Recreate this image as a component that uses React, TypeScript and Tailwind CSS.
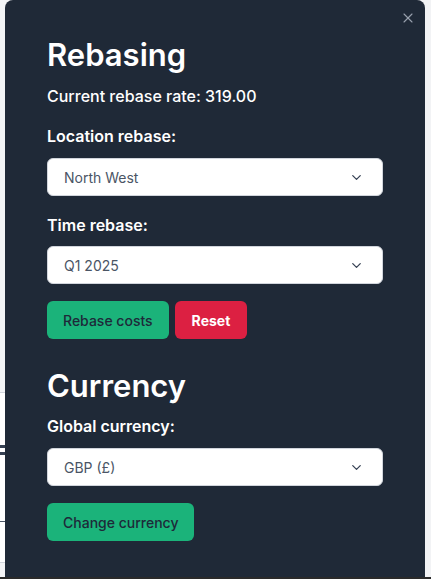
import { ChevronDown, X } from "lucide-react";

function SelectBox({ value }: { value: string }) {
  return (
    <div className="flex h-[38px] w-full items-center justify-between rounded-md border border-gray-300 bg-white pl-4 pr-[18px] text-[14px] text-gray-600">
      <span>{value}</span>
      <ChevronDown className="h-[15px] w-[15px] text-gray-700" strokeWidth={2} />
    </div>
  );
}

export default function App() {
  return (
    <div
      className="flex h-[579px] w-[431px] flex-col bg-[#f2f3f5]"
      style={{ fontFamily: "Inter, 'Noto Sans', sans-serif" }}
    >
      <div className="flex h-[577px]">
        {/* page peeking out on the left */}
        <div className="flex w-[5px] flex-col">
          <div className="h-[392px] bg-[#f3f4f6]" />
          <div className="h-px bg-gray-300" />
          <div className="h-[52px] bg-white" />
          <div className="h-[3px] bg-gray-700" />
          <div className="h-[4px] bg-white" />
          <div className="h-[3px] bg-gray-700" />
          <div className="h-[66px] bg-white" />
          <div className="h-px bg-gray-600" />
          <div className="h-[40px] bg-white" />
          <div className="h-px bg-gray-300" />
          <div className="flex-1 bg-[#f3f4f6]" />
        </div>

        <div className="flex w-[420px] flex-col rounded-t-lg bg-[#1f2937] px-[42px] pt-[37px] text-white">
          <div className="-mr-[33px] -mt-[27px] flex justify-end">
            <X className="h-[16px] w-[16px] text-gray-400" strokeWidth={1.6} />
          </div>
          <h2 className="mt-[11px] text-[31px] font-semibold leading-[36px]">Rebasing</h2>
          <p className="mt-[11px] text-[16px] font-medium leading-6">Current rebase rate: 319.00</p>

          <label className="mt-[16px] text-[16px] font-semibold leading-6">Location rebase:</label>
          <div className="mt-[10px]">
            <SelectBox value="North West" />
          </div>

          <label className="mt-[17px] text-[16px] font-semibold leading-6">Time rebase:</label>
          <div className="mt-[9px]">
            <SelectBox value="Q1 2025" />
          </div>

          <div className="mt-[17px] flex gap-[6px]">
            <button className="h-[38px] rounded-md bg-[#1bb37a] px-[16px] text-[14px] font-medium text-gray-800">
              Rebase costs
            </button>
            <button className="h-[38px] rounded-md bg-[#dc2042] px-[17px] text-[14px] font-bold text-white">
              Reset
            </button>
          </div>

          <h2 className="mt-[29px] text-[31px] font-semibold leading-[36px]">Currency</h2>
          <label className="mt-[10px] text-[16px] font-semibold leading-6">Global currency:</label>
          <div className="mt-[10px]">
            <SelectBox value="GBP (£)" />
          </div>

          <div className="mt-[17px] flex">
            <button className="h-[38px] rounded-md bg-[#1bb37a] px-[16px] text-[14px] font-medium text-gray-800">
              Change currency
            </button>
          </div>
        </div>

        <div className="flex-1 bg-[#f2f3f5]" />
      </div>
      <div className="h-[2px] bg-[#2a2a2a]" />
    </div>
  );
}
